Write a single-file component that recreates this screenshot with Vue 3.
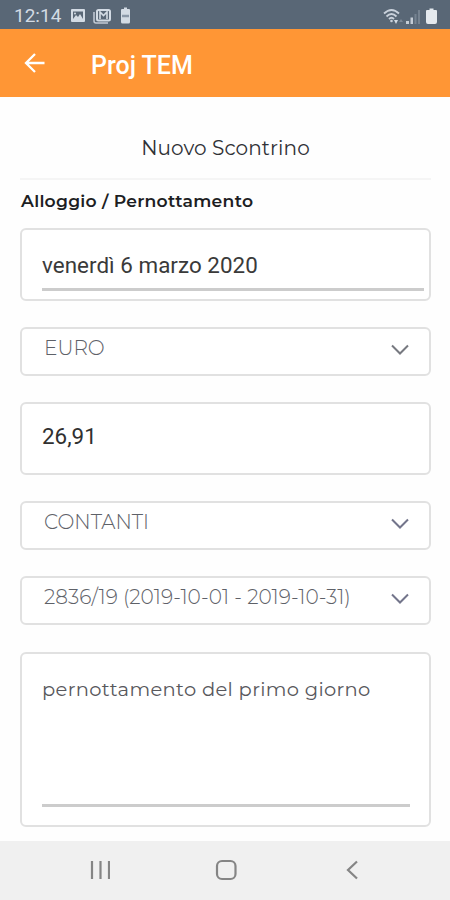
<script setup>
const date = 'venerdì 6 marzo 2020'
const amount = '26,91'
const note = 'pernottamento del primo giorno'
</script>

<template>
  <div class="screen">
    <header class="status">
      <span class="clock">12:14</span>
      <svg class="notifications" width="64" height="20" viewBox="0 0 64 20">
        <path fill="#d3dbe4" fill-rule="evenodd" d="M3 3h12q1 0 1 1v11q0 1-1 1H3q-1 0-1-1V4q0-1 1-1Zm1 11h10V5.500H4Z" />
        <path fill="#d3dbe4" d="m4 13 3-4 2 2 2-3 3 5v1H4Z" />
        <circle cx="6" cy="7.500" r="1" fill="#d3dbe4" />
        <path d="M25 6v9q0 2 2 2h12" fill="none" stroke="#c3ccd6" stroke-width="1.500" />
        <rect x="28" y="4" width="13" height="10.500" rx="1.500" fill="none" stroke="#d3dbe4" stroke-width="2" />
        <path d="M31 13V6l3.500 3.500L38 6v7" fill="none" stroke="#d3dbe4" stroke-width="1.600" />
        <path d="M53 3h2V1.500h3V3h2q1 0 1 1v12q0 1.500-1.500 1.500h-6Q52 17.500 52 16V4q0-1 1-1Z" fill="#d3dbe4" />
        <path d="M53 10h7" stroke="#8b98a8" stroke-width="2.500" />
      </svg>
      <svg class="signals" width="56" height="20" viewBox="0 0 56 20">
        <g fill="none" stroke="#c9d1db" stroke-width="1.800">
          <path d="M2 7.500q7.500-7 15 0" />
          <path d="M4.500 10.500q5-5 10 0" />
          <path d="M7 13q2.500-2.500 5 0" />
        </g>
        <circle cx="9.500" cy="15" r="1.300" fill="#c9d1db" />
        <path d="M12 14h4l-2 4Z" fill="#d3dbe4" />
        <path d="m17 16 2-3 2 3Z" fill="#7c8997" />
        <path d="M24 15h3v3h-3ZM28.500 11.500h2.500V18h-2.500Z" fill="#c4ccd5" />
        <path d="M32.500 8h2v10h-2ZM36 4h2v14h-2Z" fill="#768391" />
        <path d="M45 4h2.500V2.500h4V4H54q1 0 1 1v11q0 2-2 2h-7q-2 0-2-2V5q0-1 1-1Z" fill="#e4e9ee" />
      </svg>
    </header>

    <div class="toolbar">
      <svg width="22" height="22" viewBox="0 0 22 22">
        <path d="M20.500 11H2M11 2 2 11l9 9" fill="none" stroke="#fff" stroke-width="2.300" />
      </svg>
      <span class="title">Proj TEM</span>
    </div>

    <main class="form">
      <div class="heading">Nuovo Scontrino</div>
      <div class="category">Alloggio / Pernottamento</div>

      <div class="field date"><span>{{ date }}</span></div>

      <div class="field select">
        <span>EURO</span>
        <svg width="18" height="12" viewBox="0 0 18 12"><path d="m1 1.500 8 8 8-8" /></svg>
      </div>

      <div class="field amount"><span>{{ amount }}</span></div>

      <div class="field select">
        <span>CONTANTI</span>
        <svg class="blue" width="18" height="12" viewBox="0 0 18 12"><path d="m1 1.500 8 8 8-8" /></svg>
      </div>

      <div class="field select">
        <span>2836/19 (2019-10-01 - 2019-10-31)</span>
        <svg class="blue" width="18" height="12" viewBox="0 0 18 12"><path d="m1 1.500 8 8 8-8" /></svg>
      </div>

      <div class="field note">
        <div class="note-text">{{ note }}</div>
      </div>
    </main>

    <nav class="navbar">
      <svg width="20" height="20" viewBox="0 0 20 20"><path d="M2 1v18M10.500 1v18M19 1v18" /></svg>
      <svg width="22" height="22" viewBox="0 0 22 22"><rect x="2" y="2" width="18.500" height="18" rx="5" /></svg>
      <svg width="14" height="20" viewBox="0 0 14 20"><path d="M12 1.500 3 10l9 8.500" /></svg>
    </nav>
  </div>
</template>

<style>
body { background: #fff; }
</style>

<style scoped>
.screen {
  width: 450px;
  height: 900px;
  display: flex;
  flex-direction: column;
  overflow: hidden;
  background: #fefefe;
  font-family: Roboto, sans-serif;
  box-sizing: border-box;
}
.screen * { box-sizing: border-box; }
svg { display: block; flex: none; }
.status {
  height: 29px;
  flex: none;
  display: flex;
  align-items: center;
  padding: 3px 12px 0 14px;
  background: #596776;
}
.clock { width: 55px; font-size: 19px; line-height: 22px; color: #d3dbe4; }
.signals { margin-left: auto; }
.toolbar {
  height: 68px;
  flex: none;
  display: flex;
  align-items: center;
  gap: 45px;
  padding: 5px 24px 0;
  background: #ff9635;
}
.toolbar svg { margin-bottom: 5px; }
.title { padding-top: 1px; font-size: 25px; line-height: 30px; font-weight: 500; color: #fff; white-space: nowrap; }
.form { flex: 1; padding: 0 19px 0 20px; }
.heading, .category, .select, .note { font-family: Montserrat, Inter, sans-serif; white-space: nowrap; }
.heading {
  height: 83px;
  padding-top: 39px;
  border-bottom: 2px solid #f5f5f5;
  text-align: center;
  font-size: 20px;
  letter-spacing: 0.1px;
  line-height: 24px;
  color: #303136;
}
.category {
  height: 48px;
  padding: 9px 0 0 1px;
  font-size: 17.200px;
  letter-spacing: 0.270px;
  line-height: 24px;
  font-weight: 600;
  color: #1d1e23;
}
.field {
  width: 411px;
  border: 2px solid #e1e1e1;
  border-radius: 6px;
  background: #fff;
}
.date, .amount { height: 73px; padding: 19px 5px 0 20px; font-size: 22.400px; line-height: 32px; color: #3a3a3a; margin-bottom: 26px; }
.date span { display: block; height: 42px; border-bottom: 3px solid #ccc; letter-spacing: 0.040px; }
.amount { padding-top: 16px; color: #303030; }
.select {
  height: 49px;
  display: flex;
  justify-content: space-between;
  padding: 6px 20px 0 22px;
  margin-bottom: 26px;
  font-size: 20.100px;
  line-height: 26px;
  font-weight: 300;
  color: #5e6168;
}
.select svg { margin-top: 9px; fill: none; stroke: #777980; stroke-width: 2; }
.select svg.blue { stroke: #73758b; }
.note { height: 175px; margin-top: 27px; padding: 22px 19px 0 20px; font-size: 19.500px; letter-spacing: 0.330px; line-height: 26px; color: #58585c; }
.note-text { height: 131px; border-bottom: 3px solid #ccc; }
.navbar {
  height: 59px;
  flex: none;
  display: flex;
  align-items: center;
  justify-content: space-between;
  padding: 0 91px 1px 90px;
  background: #f0f0f0;
}
.navbar svg { fill: none; stroke: #858585; stroke-width: 2.200; }
.navbar svg:nth-child(2) { margin-right: 4px; }
</style>
